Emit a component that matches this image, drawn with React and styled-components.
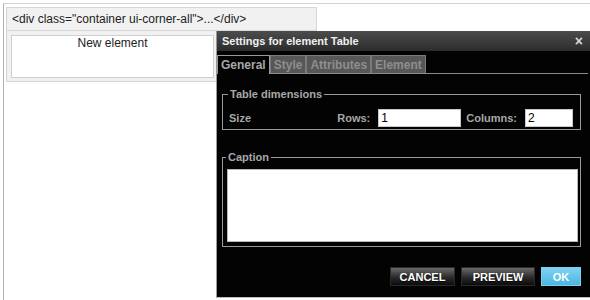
import React from "react";
import styled, { createGlobalStyle } from "styled-components";

const GlobalStyle = createGlobalStyle`
  html, body {
    margin: 0;
    padding: 0;
    background: #ffffff;
    font-family: "Liberation Sans", Arial, sans-serif;
    font-size: 12px;
  }
`;

export default function App() {
  return (
    <>
      <GlobalStyle />
      <Page>
        <Frame>
          <Container>
            <ContainerHeader>&lt;div class="container ui-corner-all"&gt;...&lt;/div&gt;</ContainerHeader>
            <ContainerBody>
              <ElementBox>New element</ElementBox>
            </ContainerBody>
          </Container>
        </Frame>
        <Dialog>
          <TitleBar>
            <span>Settings for element Table</span>
            <Close>×</Close>
          </TitleBar>
          <Tabs>
            <Tab $active>General</Tab>
            <Tab>Style</Tab>
            <Tab>Attributes</Tab>
            <Tab>Element</Tab>
          </Tabs>
          <Content>
            <Group $dims>
              <Legend>Table dimensions</Legend>
              <SizeRow>
                <Label>Size</Label>
                <Label $push="auto">Rows:</Label>
                <Input $w={83} defaultValue="1" />
                <Label $push="5px">Columns:</Label>
                <Input $w={48} defaultValue="2" />
              </SizeRow>
            </Group>
            <Group>
              <Legend>Caption</Legend>
              <Caption />
            </Group>
            <Buttons>
              <Button $w={65}>CANCEL</Button>
              <Button $w={74}>PREVIEW</Button>
              <Button $w={40} $primary>OK</Button>
            </Buttons>
          </Content>
        </Dialog>
      </Page>
    </>
  );
}

const Page = styled.div`
  position: relative;
  width: 590px;
  height: 300px;
  overflow: hidden;
`;

const Frame = styled.div`
  margin: 3px 0 0 3px;
  height: 297px;
  border-left: 1px solid #b0b0b0;
  border-top: 1px solid #d4d4d4;
  box-sizing: border-box;
  padding: 3px 0 0 2px;
`;

const Container = styled.div`
  width: 311px;
  height: 75px;
  box-sizing: border-box;
  background: #f1f1f1;
  border: 1px solid #d6d6d6;
  display: flex;
  flex-direction: column;
`;

const ContainerHeader = styled.div`
  height: 23px;
  line-height: 22px;
  padding: 0 5px;
  border-bottom: 1px solid #d6d6d6;
  color: #222;
  font-size: 12px;
  white-space: nowrap;
`;

const ContainerBody = styled.div`
  padding: 4px 4px;
`;

const ElementBox = styled.div`
  width: 203px;
  height: 43px;
  box-sizing: border-box;
  background: #fff;
  border: 1px solid #cfcfcf;
  text-align: center;
  color: #222;
  line-height: 14px;
  padding-top: 0;
`;

const Dialog = styled.div`
  position: absolute;
  left: 216px;
  top: 31px;
  width: 378px;
  height: 267px;
  box-sizing: border-box;
  background: #030303;
  border-left: 1px solid #9a9a9a;
  border-bottom: 1px solid #bdbdbd;
  display: flex;
  flex-direction: column;
`;

const TitleBar = styled.div`
  height: 20px;
  display: flex;
  align-items: center;
  justify-content: space-between;
  padding: 0 11px 0 5px;
  background: linear-gradient(#4c4c4c, #2c2c2c);
  color: #f0f0f0;
  font-weight: bold;
  font-size: 11px;
`;

const Close = styled.span`
  color: #d8d8d8;
  font-size: 14px;
  font-weight: bold;
  line-height: 1;
`;

const Tabs = styled.div`
  display: flex;
  margin: 4px 6px 0 0;
  border-bottom: 1px solid #8a8a8a;
`;

const Tab = styled.div`
  line-height: 18px;
  padding: 0 3px;
  box-sizing: border-box;
  font-weight: bold;
  font-size: 12px;
  border: 1px solid ${(p) => (p.$active ? "#9a9a9a" : "#7a7a7a")};
  border-bottom: none;
  background: ${(p) => (p.$active ? "#030303" : "#575757")};
  color: ${(p) => (p.$active ? "#a8a8a8" : "#8e8e8e")};
  margin-bottom: ${(p) => (p.$active ? "-1px" : "0")};
  height: ${(p) => (p.$active ? "19px" : "18px")};
`;

const Content = styled.div`
  padding: 13px 0 0 5px;
  display: flex;
  flex-direction: column;
`;

const Group = styled.fieldset`
  margin: ${(p) => (p.$dims ? "0" : "20px 0 0")};
  width: 359px;
  min-width: 0;
  box-sizing: border-box;
  border: 1px solid #9a9a9a;
  padding: ${(p) => (p.$dims ? "8px 7px 2px 6px" : "5px 1px 4px 4px")};
`;

const Legend = styled.legend`
  padding: 0 2px;
  margin-left: -1px;
  color: #a8a8a8;
  font-weight: bold;
  font-size: 11px;
  line-height: 14px;
`;

const SizeRow = styled.div`
  display: flex;
  align-items: center;
  height: 18px;
`;

const Label = styled.span`
  color: #a8a8a8;
  font-weight: bold;
  font-size: 11px;
  margin-left: ${(p) => p.$push || "0"};
  margin-right: ${(p) => (p.$push ? "8px" : "0")};
`;

const Input = styled.input`
  width: ${(p) => p.$w}px;
  height: 18px;
  box-sizing: border-box;
  border: 1px solid #c8c8c8;
  padding: 0 2px;
  font-family: "Liberation Sans", Arial, sans-serif;
  font-size: 12px;
  color: #000;
  background: #fff;
  outline: none;
`;

const Caption = styled.textarea`
  display: block;
  width: 351px;
  height: 73px;
  box-sizing: border-box;
  border: 1px solid #b8b8b8;
  background: #fff;
  resize: none;
  margin: 0;
  padding: 2px;
  font-family: "Liberation Sans", Arial, sans-serif;
`;

const Buttons = styled.div`
  display: flex;
  justify-content: flex-end;
  gap: 6px;
  margin: 20px 13px 0 0;
`;

const Button = styled.button`
  width: ${(p) => p.$w}px;
  height: 19px;
  padding: 0;
  box-sizing: border-box;
  font-family: "Liberation Sans", Arial, sans-serif;
  font-weight: bold;
  font-size: 11px;
  color: #fff;
  border: 1px solid ${(p) => (p.$primary ? "#7fd0ee" : "#2a2a2a")};
  background: ${(p) =>
    p.$primary
      ? "linear-gradient(#7fd3f2, #4bb6e2)"
      : "linear-gradient(#6a6a6a, #2a2a2a 55%, #0c0c0c)"};
  text-shadow: ${(p) => (p.$primary ? "none" : "0 1px 1px #000")};
`;
